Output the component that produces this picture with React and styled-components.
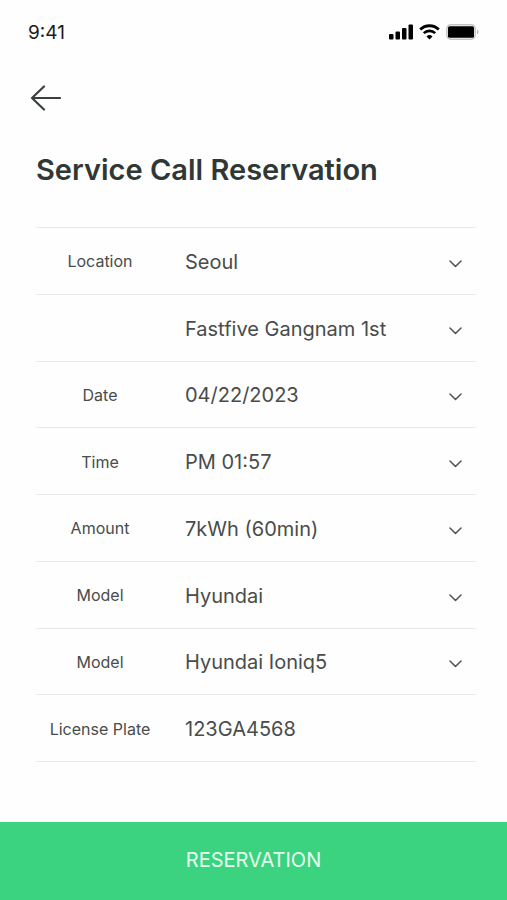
import React, { useState } from "react";
import styled, { createGlobalStyle, css } from "styled-components";

const GlobalStyle = createGlobalStyle`
  * {
    box-sizing: border-box;
  }
  body {
    margin: 0;
    background: #fefefe;
    color: #484c4b;
    font-family: Inter, "Liberation Sans", sans-serif;
  }
`;

const Screen = styled.div`
  min-height: 100vh;
  display: flex;
  flex-direction: column;
`;

const StatusBar = styled.div`
  height: 64px;
  padding: 0 28px;
  display: flex;
  align-items: center;
  justify-content: space-between;
  font-size: 19px;
  color: #1c1c1c;
`;

const StatusIcons = styled.div`
  display: flex;
  align-items: center;
  gap: 6px;
  svg {
    display: block;
  }
`;

const BackButton = styled.button`
  align-self: flex-start;
  margin: 20px 0 0 30px;
  padding: 0;
  border: 0;
  background: none;
  cursor: pointer;
  svg {
    display: block;
  }
`;

const Main = styled.main`
  flex: 1;
  display: flex;
  flex-direction: column;
  padding: 40px 31px 60px 36px;
`;

const Title = styled.h1`
  margin: 0 0 39px;
  font-size: 29px;
  line-height: 36px;
  font-weight: 600;
  color: #303836;
`;

const Form = styled.form`
  flex: 1;
  display: flex;
  flex-direction: column;
  border-top: 1px solid #e8eaea;
`;

const Row = styled.div`
  flex: 1 0 56px;
  display: grid;
  grid-template-columns: 128px 1fr;
  column-gap: 21px;
  align-items: center;
  border-bottom: 1px solid #e8eaea;
`;

const Label = styled.label`
  padding-top: 1px;
  text-align: center;
  font-size: 16px;
`;

const SelectBox = styled.div`
  display: grid;
  align-items: center;
  > * {
    grid-area: 1 / 1;
  }
  svg {
    justify-self: end;
    margin: 6px 14px 0 0;
    pointer-events: none;
  }
`;

const control = css`
  width: 100%;
  height: 40px;
  padding: 2px 0 0;
  border: 0;
  background: none;
  color: inherit;
  font: inherit;
  font-size: 20px;
`;

const Select = styled.select`
  ${control}
  appearance: none;
`;

const Input = styled.input`
  ${control}
`;

const SubmitButton = styled.button`
  height: 78px;
  padding: 0 0 2px;
  border: 0;
  background: #3bd380;
  color: #e6fbef;
  font: inherit;
  font-size: 20px;
  cursor: pointer;
`;

const Chevron = () => (
  <svg width="13" height="8" viewBox="0 0 13 8" fill="none" aria-hidden="true">
    <path
      d="M1 1l5.5 5.5L12 1"
      stroke="#505554"
      strokeWidth="1.5"
      strokeLinecap="round"
      strokeLinejoin="round"
    />
  </svg>
);

const SignalIcon = () => (
  <svg width="24" height="16" viewBox="0 0 24 16" aria-hidden="true">
    <rect x="0" y="10" width="4.5" height="5.5" rx="1" />
    <rect x="6.5" y="7.5" width="4.5" height="8" rx="1" />
    <rect x="13" y="4" width="4.5" height="11.5" rx="1" />
    <rect x="19.5" y="0.5" width="4.5" height="15" rx="1" />
  </svg>
);

const WifiIcon = () => (
  <svg width="21" height="16" viewBox="0 0 21 16" fill="none" aria-hidden="true">
    <path d="M1.2 5.6a13.2 13.2 0 0 1 18.6 0" stroke="#000" strokeWidth="2.8" />
    <path d="M4.8 9.2a8.1 8.1 0 0 1 11.4 0" stroke="#000" strokeWidth="2.6" />
    <path d="M10.5 15.5l-3-3.1a4.4 4.4 0 0 1 6 0z" fill="#000" />
  </svg>
);

const BatteryIcon = () => (
  <svg width="33" height="16" viewBox="0 0 33 16" fill="none" aria-hidden="true">
    <rect x="0.8" y="0.8" width="28.4" height="14.4" rx="4" stroke="#c4c4c4" strokeWidth="1.5" />
    <rect x="2" y="2.2" width="26" height="11.6" rx="1.5" fill="#000" />
    <path d="M31 5.5c2 1 2 4 0 5z" fill="#b8b8b8" />
  </svg>
);

const fields = [
  { id: "city", label: "Location", options: ["Seoul"] },
  { id: "place", hint: "Place", options: ["Fastfive Gangnam 1st"] },
  { id: "date", label: "Date", options: ["04/22/2023"] },
  { id: "time", label: "Time", options: ["PM 01:57"] },
  { id: "amount", label: "Amount", options: ["7kWh (60min)"] },
  { id: "maker", label: "Model", options: ["Hyundai"] },
  { id: "model", label: "Model", options: ["Hyundai Ioniq5"] }
];

const App = () => {
  const [plate, setPlate] = useState("123GA4568");

  return (
    <Screen>
      <GlobalStyle />
      <StatusBar>
        <span>9:41</span>
        <StatusIcons>
          <SignalIcon />
          <WifiIcon />
          <BatteryIcon />
        </StatusIcons>
      </StatusBar>
      <BackButton type="button" aria-label="Back">
        <svg width="31" height="28" viewBox="0 0 31 28" fill="none">
          <path
            d="M14 2.5L2 14l12 11.5M2 14h28"
            stroke="#3a403e"
            strokeWidth="2.2"
            strokeLinecap="round"
            strokeLinejoin="round"
          />
        </svg>
      </BackButton>
      <Main>
        <Title>Service Call Reservation</Title>
        <Form id="reservation" onSubmit={e => e.preventDefault()}>
          {fields.map(({ id, label, hint, options }) => (
            <Row key={id}>
              <Label htmlFor={id}>{label}</Label>
              <SelectBox>
                <Select id={id} name={id} aria-label={hint}>
                  {options.map(option => (
                    <option key={option}>{option}</option>
                  ))}
                </Select>
                <Chevron />
              </SelectBox>
            </Row>
          ))}
          <Row>
            <Label htmlFor="plate">License Plate</Label>
            <Input
              id="plate"
              name="plate"
              value={plate}
              onChange={e => setPlate(e.target.value)}
            />
          </Row>
        </Form>
      </Main>
      <SubmitButton type="submit" form="reservation">
        RESERVATION
      </SubmitButton>
    </Screen>
  );
};

export default App;
